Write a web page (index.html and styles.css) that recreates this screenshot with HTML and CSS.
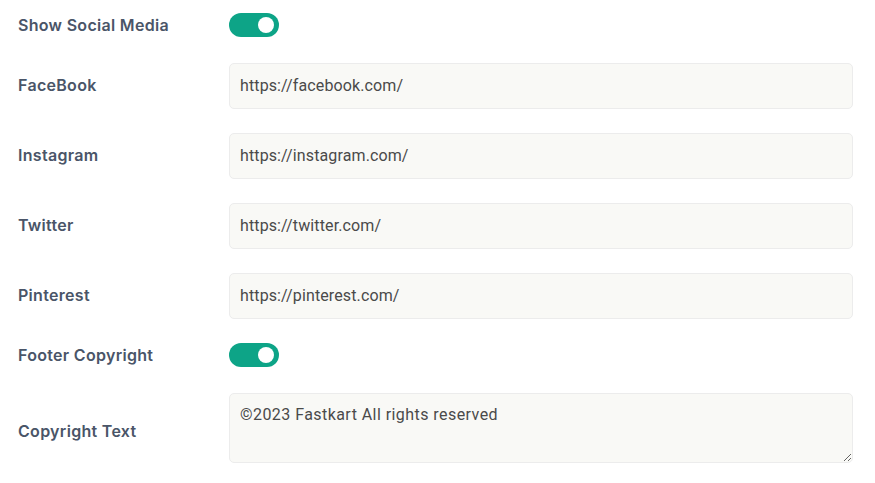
FILE: index.html
```html
<!DOCTYPE html>
<html>
<head>
<meta charset="utf-8">
<link rel="stylesheet" href="styles.css">
</head>
<body>
<form class="settings">
  <div class="row row-toggle">
    <label class="label">Show Social Media</label>
    <div class="field"><span class="switch"><span class="knob"></span></span></div>
  </div>
  <div class="row">
    <label class="label">FaceBook</label>
    <div class="field"><input class="input" type="text" value="https://facebook.com/"></div>
  </div>
  <div class="row">
    <label class="label">Instagram</label>
    <div class="field"><input class="input" type="text" value="https://instagram.com/"></div>
  </div>
  <div class="row">
    <label class="label">Twitter</label>
    <div class="field"><input class="input" type="text" value="https://twitter.com/"></div>
  </div>
  <div class="row">
    <label class="label">Pinterest</label>
    <div class="field"><input class="input" type="text" value="https://pinterest.com/"></div>
  </div>
  <div class="row row-toggle">
    <label class="label">Footer Copyright</label>
    <div class="field"><span class="switch"><span class="knob"></span></span></div>
  </div>
  <div class="row">
    <label class="label label-low">Copyright Text</label>
    <div class="field"><textarea class="textarea">©2023 Fastkart All rights reserved</textarea></div>
  </div>
</form>
</body>
</html>
```

FILE: styles.css
```css
* { box-sizing: border-box; }
html, body { margin: 0; padding: 0; background: #ffffff; }
body { font-family: Roboto, "Noto Sans", sans-serif; }
.settings {
  display: flex;
  flex-direction: column;
  gap: 24px;
  padding: 13px 22px 0 18px;
}
.row {
  display: flex;
  align-items: center;
}
.row-toggle {
  height: 26px;
  align-items: flex-start;
}
.row-toggle .label { line-height: 24px; }
.label {
  width: 211px;
  flex: none;
  font-size: 16px;
  font-weight: 600;
  letter-spacing: 0.3px;
  color: #4a5568;
  font-family: Inter, "Noto Sans", sans-serif;
  line-height: 22px;
  margin-top: -2px;
}
.row-toggle .label { margin-top: 0; }
.label-low { padding-top: 5px; margin-top: 0; }
.field { flex: 1; display: flex; }
.switch {
  position: relative;
  display: block;
  width: 50px;
  height: 24px;
  border-radius: 12px;
  background: #0da487;
}
.knob {
  position: absolute;
  top: 4px;
  right: 5px;
  width: 16px;
  height: 16px;
  border-radius: 50%;
  background: #ffffff;
}
.input, .textarea {
  width: 100%;
  background: #f9f9f6;
  border: 1px solid #ececec;
  border-radius: 5px;
  font-family: Roboto, sans-serif;
  font-size: 16px;
  letter-spacing: 0.12px;
  color: #4a4a4a;
  padding: 0 10px;
  outline: none;
}
.input { height: 46px; padding-bottom: 2px; }
.textarea {
  height: 70px;
  padding: 10px 10px;
  line-height: 22px;
  letter-spacing: 0.44px;
  resize: vertical;
}
```
